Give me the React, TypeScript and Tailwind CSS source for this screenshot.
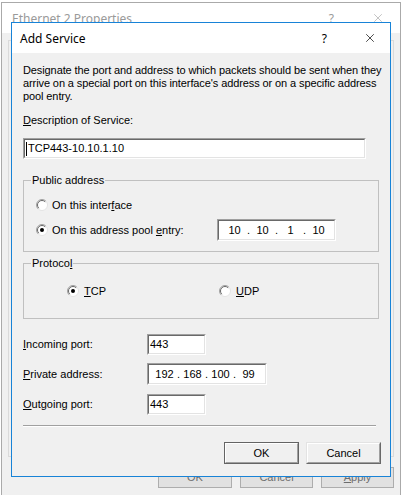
import { X } from "lucide-react";

function Sunken({ className, children }: { className: string; children?: React.ReactNode }) {
  return (
    <div className={`border border-t-[#a0a0a0] border-l-[#a0a0a0] border-b-white border-r-white ${className}`}>
      <div className="flex h-full w-full items-center border border-t-[#696969] border-l-[#696969] border-b-[#e3e3e3] border-r-[#e3e3e3] bg-white">
        {children}
      </div>
    </div>
  );
}

function IpBox({ parts, className }: { parts: string[]; className: string }) {
  return (
    <Sunken className={className}>
      <div className="flex items-center pl-[5px]">
        {parts.map((p, i) => (
          <div key={i} className="flex items-center">
            <span className="w-[21px] text-center">{p}</span>
            {i < parts.length - 1 && <span className="w-[7px] text-center">.</span>}
          </div>
        ))}
      </div>
    </Sunken>
  );
}

function Radio({ checked }: { checked?: boolean }) {
  return (
    <svg width="12" height="12" viewBox="0 0 12 12" className="shrink-0">
      <circle cx="6" cy="6" r="5.5" fill="#fff" />
      <path d="M2.1 9.9 A5.5 5.5 0 0 1 9.9 2.1" fill="none" stroke="#a0a0a0" strokeWidth="1" />
      <path d="M2.8 9.2 A4.5 4.5 0 0 1 9.2 2.8" fill="none" stroke="#696969" strokeWidth="1" />
      <path d="M9.9 2.1 A5.5 5.5 0 0 1 2.1 9.9" fill="none" stroke="#e3e3e3" strokeWidth="1" />
      {checked && <circle cx="6" cy="6" r="2" fill="#000" />}
    </svg>
  );
}

function Button({ children, primary, className }: { children: React.ReactNode; primary?: boolean; className: string }) {
  return (
    <div className={`border ${primary ? "border-[#646464]" : "border-t-[#e3e3e3] border-l-[#e3e3e3] border-b-[#696969] border-r-[#696969]"} ${className}`}>
      <div className="flex h-full w-full items-center justify-center border border-t-white border-l-white border-b-[#a0a0a0] border-r-[#a0a0a0] bg-[#f0f0f0]">
        {children}
      </div>
    </div>
  );
}

export default function App() {
  return (
    <div className="relative h-[495px] w-[402px] overflow-hidden bg-white text-[11px] leading-[13px] text-black [font-family:'Liberation_Sans',Arial,sans-serif]">
      {/* window behind */}
      <div className="ml-[1px] mt-[2px] flex h-[500px] w-[400px] flex-col border-l border-r border-t border-[#aaaaaa]">
        <div className="flex h-[30px] items-center bg-white pl-[10px] text-[12px] text-[#9a9a9a] [font-family:'Noto_Sans',sans-serif]">
          <span>Ethernet 2 Properties</span>
          <span className="ml-auto mr-[37px]">?</span>
          <X className="mr-[15px] h-[14px] w-[14px]" strokeWidth={1} />
        </div>
        <div className="flex flex-1 flex-col bg-[#f0f0f0] px-[6px] pt-[7px]">
          <div className="h-[417px] border border-[#dadada]" />
          <div className="mt-[10px] flex justify-end gap-[8px] text-[#6d6d6d]">
            <div className="flex h-[21px] w-[74px] items-center justify-center border border-[#adadad] bg-[#e1e1e1]">OK</div>
            <div className="flex h-[21px] w-[73px] items-center justify-center border border-[#adadad] bg-[#e1e1e1]">Cancel</div>
            <div className="flex h-[21px] w-[73px] items-center justify-center border border-[#adadad] bg-[#e1e1e1]">
              <span className="underline">A</span>pply
            </div>
          </div>
        </div>
      </div>

      {/* Add Service dialog */}
      <div className="absolute left-[11px] top-[22px] flex h-[455px] w-[380px] flex-col border border-[#1883d7] bg-[#f0f0f0]">
        <div className="flex h-[30px] shrink-0 items-center bg-white pl-[8px] text-[12px] [font-family:'Noto_Sans',sans-serif]">
          <span>Add Service</span>
          <span className="ml-auto mr-[36px]">?</span>
          <X className="mr-[13px] h-[14px] w-[14px]" strokeWidth={1.2} />
        </div>
        <div className="flex flex-1 flex-col pl-[11px] pr-[11px]">
          <p className="-mr-[11px] mt-[11px] whitespace-nowrap tracking-[-0.1px]">
            Designate the port and address to which packets should be sent when they
            <br />
            arrive on a special port on this interface's address or on a specific address
            <br />
            pool entry.
          </p>
          <div className="mt-[11px]">
            <span className="underline">D</span>escription of Service:
          </div>
          <Sunken className="mt-[11px] h-[21px] w-[343px]">
            <span className="ml-[1px] h-[14px] w-[1px] bg-black" />
            <span className="ml-[1px]">TCP443-10.10.1.10</span>
          </Sunken>

          <fieldset className="mt-[15px] border border-[#c0c0c0] pb-[10px]">
            <legend className="ml-[7px] px-[1px]">Public address</legend>
            <div className="pl-[12px]">
              <div className="mt-[10px] flex h-[16px] items-center gap-[4px]">
                <Radio />
                <span>
                  On this inter<span className="underline">f</span>ace
                </span>
              </div>
              <div className="mt-[6px] flex h-[22px] items-center gap-[4px]">
                <Radio checked />
                <span className="w-[161px]">
                  On this address pool <span className="underline">e</span>ntry:
                </span>
                <IpBox parts={["10", "10", "1", "10"]} className="h-[22px] w-[119px]" />
              </div>
            </div>
          </fieldset>

          <fieldset className="mt-[5px] border border-[#c0c0c0] pb-[19px]">
            <legend className="ml-[7px] px-[1px]">
              Protoco<span className="underline">l</span>
            </legend>
            <div className="mt-[13px] flex h-[16px] items-center">
              <div className="ml-[43px] flex w-[152px] items-center gap-[5px]">
                <Radio checked />
                <span>
                  <span className="underline">T</span>CP
                </span>
              </div>
              <div className="flex items-center gap-[5px]">
                <Radio />
                <span>
                  <span className="underline">U</span>DP
                </span>
              </div>
            </div>
          </fieldset>

          <div className="mt-[15px] flex h-[21px] items-center">
            <span className="w-[124px]">
              <span className="underline">I</span>ncoming port:
            </span>
            <Sunken className="h-[21px] w-[59px]">
              <span className="ml-[1px]">443</span>
            </Sunken>
          </div>
          <div className="mt-[8px] flex h-[22px] items-center">
            <span className="w-[124px]">
              <span className="underline">P</span>rivate address:
            </span>
            <IpBox parts={["192", "168", "100", "99"]} className="h-[22px] w-[120px]" />
          </div>
          <div className="mt-[9px] flex h-[21px] items-center">
            <span className="w-[124px]">
              <span className="underline">O</span>utgoing port:
            </span>
            <Sunken className="h-[21px] w-[59px]">
              <span className="ml-[1px]">443</span>
            </Sunken>
          </div>

          <div className="mt-[10px] h-[2px] w-[353px] border-b border-t border-b-white border-t-[#a0a0a0]" />

          <div className="-mr-[2px] mt-[15px] flex justify-end gap-[7px]">
            <Button primary className="h-[22px] w-[75px]">
              OK
            </Button>
            <Button className="h-[22px] w-[75px]">Cancel</Button>
          </div>
        </div>
      </div>
    </div>
  );
}
